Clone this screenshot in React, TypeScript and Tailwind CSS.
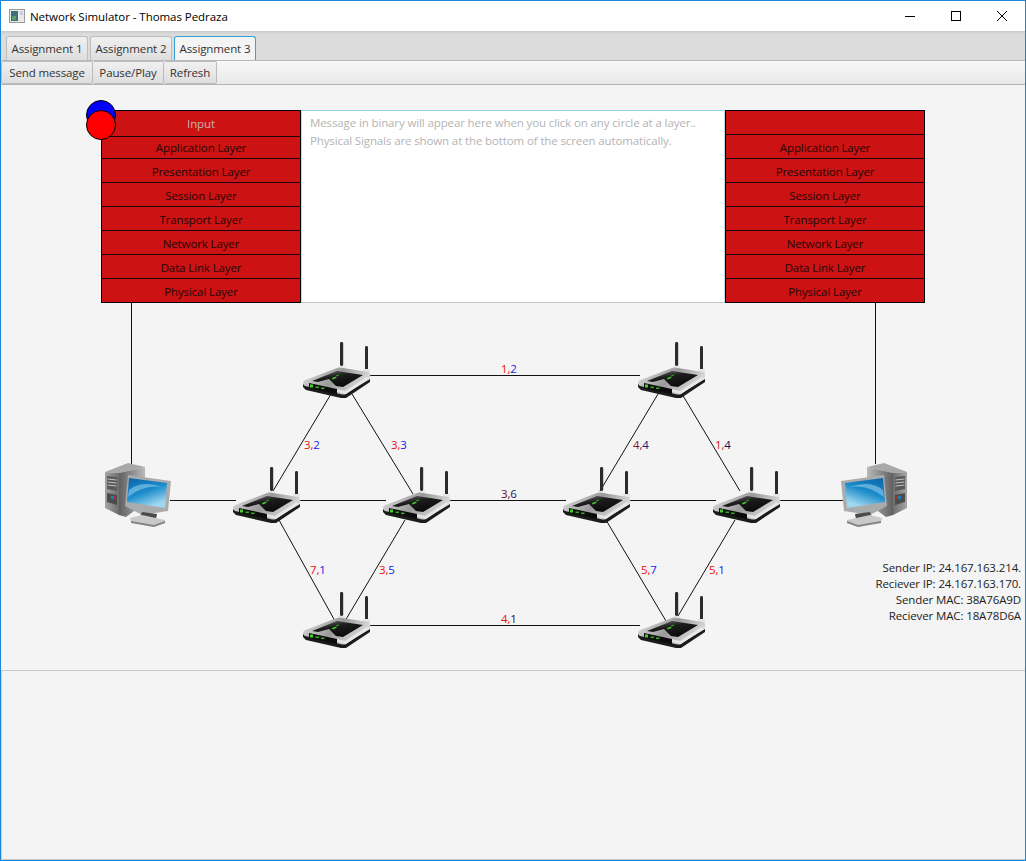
import React from "react";

const FONT = "font-['Open_Sans','Noto_Sans',sans-serif]";

const LAYERS = [
  "Application Layer",
  "Presentation Layer",
  "Session Layer",
  "Transport Layer",
  "Network Layer",
  "Data Link Layer",
  "Physical Layer",
];

// page coordinates of the top left corner of each picture
const ROUTERS = [
  [303, 342],
  [638, 342],
  [233, 467],
  [383, 467],
  [563, 467],
  [713, 467],
  [303, 592],
  [638, 592],
];

const LINKS = [
  [131, 303, 131, 464],
  [875, 303, 875, 464],
  [368, 375, 640, 375],
  [170, 500, 236, 500],
  [298, 500, 386, 500],
  [448, 500, 566, 500],
  [628, 500, 716, 500],
  [778, 500, 844, 500],
  [368, 625, 640, 625],
  [331, 394, 273, 491],
  [352, 394, 413, 494],
  [658, 394, 600, 491],
  [682, 394, 740, 491],
  [279, 520, 335, 621],
  [405, 520, 345, 621],
  [606, 520, 666, 621],
  [735, 520, 675, 621],
];

const LABELS = [
  { x: 501, y: 361, a: "1,", b: "2", ca: "text-[#ee1111]", cb: "text-[#1a1ae6]" },
  { x: 304, y: 437, a: "3,", b: "2", ca: "text-[#ee1111]", cb: "text-[#1a1ae6]" },
  { x: 391, y: 437, a: "3,", b: "3", ca: "text-[#ee1111]", cb: "text-[#1a1ae6]" },
  { x: 633, y: 437, a: "4,", b: "4", ca: "text-[#8e1020]", cb: "text-[#20206e]" },
  { x: 715, y: 437, a: "1,", b: "4", ca: "text-[#d01818]", cb: "text-[#101050]" },
  { x: 501, y: 486, a: "3,", b: "6", ca: "text-[#60102a]", cb: "text-[#181868]" },
  { x: 310, y: 562, a: "7,", b: "1", ca: "text-[#ee1111]", cb: "text-[#1a1ae6]" },
  { x: 379, y: 562, a: "3,", b: "5", ca: "text-[#ee1111]", cb: "text-[#1a1ae6]" },
  { x: 641, y: 562, a: "5,", b: "7", ca: "text-[#ee1111]", cb: "text-[#1a1ae6]" },
  { x: 709, y: 562, a: "5,", b: "1", ca: "text-[#ee1111]", cb: "text-[#1a1ae6]" },
  { x: 501, y: 611, a: "4,", b: "1", ca: "text-[#ee1111]", cb: "text-[#301050]" },
];

function Router({ x, y }: { x: number; y: number }) {
  return (
    <svg
      width="68"
      height="58"
      viewBox="0 0 68 58"
      className="absolute blur-[0.35px]"
      style={{ left: x - 1, top: y - 303 }}
    >
      <defs>
        <linearGradient id="rtBody" x1="0" y1="0" x2="1" y2="0.4">
          <stop offset="0" stopColor="#e8e8e8" />
          <stop offset="0.55" stopColor="#9a9a9a" />
          <stop offset="1" stopColor="#dedede" />
        </linearGradient>
        <linearGradient id="rtTop" x1="0" y1="0" x2="0.6" y2="1">
          <stop offset="0" stopColor="#7a7a7a" />
          <stop offset="0.45" stopColor="#1c1c1c" />
          <stop offset="1" stopColor="#0a0a0a" />
        </linearGradient>
      </defs>
      <rect x="37" y="0" width="3.2" height="24" rx="1.4" fill="#2b2b2b" />
      <rect x="62" y="4" width="3" height="24" rx="1.4" fill="#2b2b2b" />
      <path d="M35 24 L42 24 L42 28 L35 28 Z" fill="#e6e6e6" />
      <path d="M60 27 L67 27 L67 31 L60 31 Z" fill="#e6e6e6" />
      <path d="M0 42 L42 52 L67 37 L67 40 L43 56 L38 56 L3 48 L0 45 Z" fill="#1b1b1b" />
      <path d="M0 40 Q1 38 5 37 L34 26 Q37 25 40 26 L65 30 Q68 31 67 36 L43 52 Q41 53 37 52 L2 44 Q0 43 0 40 Z" fill="url(#rtBody)" />
      <path d="M9 39 L34 29 L60 33 L40 45 L33 44 L26 37 L15 40 Z" fill="url(#rtTop)" />
      <path d="M6 41 L34 47 L34 52 L6 46 Z" fill="#0c0c0c" />
      <path d="M34 47 L42 49 L64 35 L65 37 L43 52 L34 50 Z" fill="#f0f0f0" opacity="0.75" />
      <rect x="7" y="42.5" width="3" height="3" fill="#43d12c" />
      <rect x="12.5" y="44.5" width="3.5" height="1.6" fill="#3aa82a" />
      <rect x="18" y="45.5" width="3.5" height="1.6" fill="#3aa82a" />
      <path d="M29 36 L33 34.5 L33.5 36 L29.5 37.5 Z" fill="#45c82f" />
      <path d="M33 33.5 L35.5 32.5 L36 33.5 L33.5 34.5 Z" fill="#3aa82a" />
    </svg>
  );
}

function Computer({ x, y, flip }: { x: number; y: number; flip?: boolean }) {
  return (
    <svg
      width="68"
      height="65"
      viewBox="0 0 68 65"
      className="absolute blur-[0.35px]"
      style={{ left: x - 1, top: y - 303 }}
    >
      <defs>
        <linearGradient id="pcSide" x1="0" y1="0" x2="1" y2="0">
          <stop offset="0" stopColor="#a5a5a5" />
          <stop offset="1" stopColor="#6e6e6e" />
        </linearGradient>
        <linearGradient id="pcRight" x1="0" y1="0" x2="1" y2="0">
          <stop offset="0" stopColor="#606060" />
          <stop offset="1" stopColor="#b9b9b9" />
        </linearGradient>
        <linearGradient id="pcScreen" x1="0" y1="0" x2="0.5" y2="1">
          <stop offset="0" stopColor="#0a64a8" />
          <stop offset="0.55" stopColor="#1c8ccb" />
          <stop offset="1" stopColor="#9fd7ee" />
        </linearGradient>
      </defs>
      <g transform={flip ? "translate(68 0) scale(-1 1)" : undefined}>
        <path d="M1 9 L24 0 L41 4 L15 10 Z" fill="#a8a8a8" />
        <path d="M15 10 L41 4 L41 40 L22 54 L15 52 Z" fill="url(#pcRight)" />
        <path d="M1 9 L15 10 L15 52 L1 45 Z" fill="url(#pcSide)" />
        <path d="M3 13 L13 14 L13 28 L3 26 Z" fill="#5a5a5a" />
        <path d="M3.5 16 L12.5 17 M3.5 19 L12.5 20 M3.5 22 L12.5 23" stroke="#c4c4c4" strokeWidth="1" />
        <path d="M3 30 L13 32 L13 42 L3 39 Z" fill="#4c4c4c" />
        <rect x="7" y="33" width="3" height="3" fill="#1f7fb0" />
        <rect x="10" y="33" width="2" height="3" fill="#a03030" />
        <path d="M24 12 L67 18 L64 48 L38 52 L21 43 Z" fill="#a9abad" />
        <path d="M25 15 L63 20 L61 45 L23 39 Z" fill="url(#pcScreen)" />
        <path d="M25 27 Q38 17 58 24 Q40 21 24 34 Z" fill="#7cc3e6" opacity="0.7" />
        <path d="M38 49 L53 51 L52 56 L36 54 Z" fill="#4a4a4a" />
        <path d="M26 55 L38 52 L61 57 L61 60 L50 64 L27 59 Z" fill="#c9c9c9" />
        <path d="M27 58 L50 62 L61 58 L61 60 L50 64 L27 60 Z" fill="#858585" />
      </g>
    </svg>
  );
}

function LayerStack({ first, tall }: { first: string; tall?: boolean }) {
  return (
    <div className="flex h-[193px] w-[200px] flex-col bg-[#cc1212] border border-black text-center text-[#240606]">
      <div className={`${tall ? "h-[26px] leading-[25px]" : "h-[24px]"} border-b border-[#1c0505] text-[#c8b4b4]`}>{first}</div>
      {LAYERS.map((name, i) => {
        const last = i === LAYERS.length - 1;
        const height = i === 0 && tall ? "h-[22px]" : last ? "h-[23px]" : "h-[24px]";
        return (
          <div
            key={name}
            className={`${height} flex items-end justify-center leading-[20px] ${last ? "" : "border-b border-[#1c0505]"}`}
          >
            {name}
          </div>
        );
      })}
    </div>
  );
}

export default function App() {
  return (
    <div className={`${FONT} flex h-[861px] w-[1026px] flex-col overflow-hidden border border-[#1a86d8] bg-[#f4f4f4] text-[11.5px] tracking-[-0.12px] text-[#333]`}>
      {/* title bar */}
      <div className="flex h-[30px] items-center bg-white pl-[8px] text-black">
        <svg width="16" height="14" viewBox="0 0 16 14">
          <rect x="0.5" y="0.5" width="15" height="13" fill="#e9e9e9" stroke="#9a9a9a" />
          <rect x="2" y="2" width="7" height="10" fill="#3f6f78" />
          <rect x="3" y="7" width="4" height="4" fill="#57a06a" />
          <rect x="11" y="2" width="3" height="4" fill="#c4cdd8" />
        </svg>
        <span className="ml-[5px] pt-[1px] tracking-[-0.05px]">Network Simulator - Thomas Pedraza</span>
        <div className="ml-auto flex items-center">
          <div className="flex w-[46px] justify-center">
            <svg width="12" height="12" viewBox="0 0 12 12">
              <path d="M1 6.5 H11" stroke="#000" strokeWidth="1" />
            </svg>
          </div>
          <div className="flex w-[46px] justify-center">
            <svg width="12" height="12" viewBox="0 0 12 12">
              <rect x="1.5" y="1.5" width="9" height="9" fill="none" stroke="#000" />
            </svg>
          </div>
          <div className="flex w-[46px] justify-center">
            <svg width="12" height="12" viewBox="0 0 12 12">
              <path d="M1 1 L11 11 M11 1 L1 11" stroke="#000" strokeWidth="1" />
            </svg>
          </div>
        </div>
      </div>

      {/* tab header */}
      <div className="flex h-[29px] items-end gap-[2px] bg-[#dcdcdc] pl-[5px] shadow-[inset_0_3px_3px_-2px_#c4c4c4]">
        <div className="flex h-[24px] w-[82px] items-center justify-center rounded-t-[3px] border border-b-0 border-[#bdbdbd] bg-gradient-to-b from-[#f0f0f0] to-[#dedede]">
          Assignment 1
        </div>
        <div className="flex h-[24px] w-[82px] items-center justify-center rounded-t-[3px] border border-b-0 border-[#bdbdbd] bg-gradient-to-b from-[#f0f0f0] to-[#dedede]">
          Assignment 2
        </div>
        <div className="flex h-[24px] w-[82px] items-center justify-center rounded-t-[3px] border border-b-0 border-[#34a3d8] bg-[#f4f4f4]">
          Assignment 3
        </div>
      </div>

      {/* toolbar */}
      <div className="flex h-[25px] border-y border-t-[#b8b8b8] border-b-[#b4b4b4] bg-gradient-to-b from-[#f8f8f8] to-[#e8e8e8]">
        <div className="flex w-[92px] items-center justify-center rounded-[2px] border border-[#bcbcbc] bg-gradient-to-b from-[#f0f0f0] to-[#dedede]">
          Send message
        </div>
        <div className="flex w-[71px] items-center justify-center rounded-[2px] border border-l-0 border-[#bcbcbc] bg-gradient-to-b from-[#f0f0f0] to-[#dedede]">
          Pause/Play
        </div>
        <div className="flex w-[53px] items-center justify-center rounded-[2px] border border-l-0 border-[#bcbcbc] bg-gradient-to-b from-[#f0f0f0] to-[#dedede]">
          Refresh
        </div>
      </div>

      {/* simulator */}
      <div className="relative h-[585px] shrink-0">
        <div className="relative ml-[100px] mt-[25px] flex w-[824px]">
          <LayerStack first="Input" tall />
          <div className="h-[193px] w-[424px] whitespace-nowrap border border-t-[#8fd0ec] border-x-[#b9dcec] border-b-[#c4c4c4] bg-white px-[8px] pt-[3px] leading-[18px] text-[#b4b4b4]">
            <div>Message in binary will appear here when you click on any circle at a layer..</div>
            <div>Physical Signals are shown at the bottom of the screen automatically.</div>
          </div>
          <LayerStack first="" />
          <div className="absolute left-[-15px] top-[-10px] h-[30px] w-[30px] rounded-full border border-black bg-[#0000ff]" />
          <div className="absolute left-[-15px] top-0 h-[30px] w-[30px] rounded-full border border-black bg-[#ff0000]" />
        </div>

        {/* network canvas, starts right under the layer stacks */}
        <div className="relative h-[367px]">
          <svg width="1024" height="367" className="absolute left-0 top-0">
            {LINKS.map(([x1, y1, x2, y2], i) => (
              <line
                key={i}
                x1={x1 - 1}
                y1={y1 - 303}
                x2={x2 - 1}
                y2={y2 - 303}
                stroke="#111"
                strokeWidth="1"
                shapeRendering={y1 === y2 || x1 === x2 ? "crispEdges" : undefined}
              />
            ))}
          </svg>
          {ROUTERS.map(([x, y]) => (
            <Router key={`${x}-${y}`} x={x} y={y} />
          ))}
          <Computer x={104} y={463} />
          <Computer x={840} y={463} flip />
          {LABELS.map((l) => (
            <div
              key={`${l.x}-${l.y}`}
              className="absolute leading-[16px]"
              style={{ left: l.x - 1, top: l.y - 303 }}
            >
              <span className={l.ca}>{l.a}</span>
              <span className={l.cb}>{l.b}</span>
            </div>
          ))}
          <div className="absolute right-[4px] top-[257px] text-right leading-[16px] text-[#222]">
            <div>Sender IP: 24.167.163.214.</div>
            <div>Reciever IP: 24.167.163.170.</div>
            <div>Sender MAC: 38A76A9D</div>
            <div>Reciever MAC: 18A78D6A</div>
          </div>
        </div>
      </div>

      {/* signal pane */}
      <div className="flex-1 border border-r-0 border-[#c8c8c8] border-l-[#d0d0d0]" />
    </div>
  );
}
